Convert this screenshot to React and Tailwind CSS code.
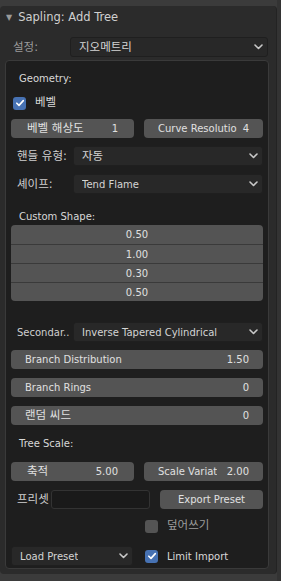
import React from 'react';

const font = { fontFamily: '"DejaVu Sans", "Noto Sans CJK KR", sans-serif' };

// Korean glyphs render smaller than the reference at 10px, bump them a little
const K = ({ children }) => <span className="text-[11.5px] leading-none">{children}</span>;

const Chevron = () => (
	<svg width="9" height="6" viewBox="0 0 9 6" className="shrink-0">
		<path d="M1 1 L4.5 4.5 L8 1" fill="none" stroke="#c8c8c8" strokeWidth="1.6" strokeLinecap="round" strokeLinejoin="round" />
	</svg>
);

const Dropdown = ({ value, className = '' }) => (
	<div className={`h-[20px] flex items-center justify-between pl-[8px] pr-[4px] rounded-[3px] bg-[#282828] border border-[#1f1f1f] text-[#d4d4d4] ${className}`}>
		<span className="truncate">{value}</span>
		<Chevron />
	</div>
);

const NumField = ({ label, value, className = '' }) => (
	<div className={`h-[19px] flex items-center justify-between px-[14px] rounded-[4px] bg-[#545454] text-[#e0e0e0] ${className}`}>
		<span className="truncate">{label}</span>
		<span>{value}</span>
	</div>
);

const Check = ({ on }) => (
	<div className={`w-[13px] h-[13px] rounded-[3px] flex items-center justify-center shrink-0 ${on ? 'bg-[#4772b3]' : 'bg-[#545454]'}`}>
		{on && (
			<svg width="10" height="10" viewBox="0 0 10 10">
				<path d="M1.8 5.2 L4 7.4 L8.3 2.6" fill="none" stroke="#ffffff" strokeWidth="1.6" strokeLinecap="round" strokeLinejoin="round" />
			</svg>
		)}
	</div>
);

const Row = ({ label, children }) => (
	<div className="flex items-center h-[20px]">
		<span className="w-[62px] pl-[6px] text-[#cfcfcf] shrink-0 whitespace-nowrap">{label}</span>
		<div className="flex-1">{children}</div>
	</div>
);

export default function App() {
	return (
		<div style={font} className="w-[281px] h-[581px] bg-[#3b3b3b] overflow-hidden flex text-[10px]">
			<div className="w-[277px] mt-[6px] h-[568px] bg-[#2b2b2b] rounded-[4px] border-r border-[#232323] flex flex-col">
				<div className="h-[24px] flex items-center pl-[6px] gap-[6px] text-[#d0d0d0] text-[11.5px]">
					<span className="text-[8px] text-[#9a9a9a]">▼</span>
					<span>Sapling: Add Tree</span>
				</div>
				<div className="flex items-center h-[20px] mt-[7px] pr-[8px]">
					<span className="w-[70px] pl-[13px] text-[#9c9c9c]"><K>설정:</K></span>
					<Dropdown value={<K>지오메트리</K>} className="flex-1" />
				</div>
				<div className="mt-[3px] ml-[5px] w-[264px] h-[509px] bg-[#1e1e1e] border border-[#3a3a3a] rounded-[4px] flex flex-col pl-[5px] pr-[5px] text-[#d8d8d8]">
					<div className="h-[24px] flex items-end pl-[8px] mt-[1px]">Geometry:</div>
					<div className="flex items-center gap-[9px] h-[20px] mt-[7px] pl-[2px]">
						<Check on />
						<K>베벨</K>
					</div>
					<div className="flex gap-[10px] mt-[6px]">
						<NumField label={<K>베벨 해상도</K>} value="1" className="flex-1 px-[16px]" />
						<NumField label="Curve Resolutio" value="4" className="flex-1 px-[14px]" />
					</div>
					<div className="flex flex-col gap-[8px] mt-[8px]">
						<Row label={<K>핸들 유형:</K>}><Dropdown value={<K>자동</K>} /></Row>
						<Row label={<K>셰이프:</K>}><Dropdown value="Tend Flame" /></Row>
					</div>
					<div className="h-[20px] flex items-end pl-[8px] mt-[10px]">Custom Shape:</div>
					<div className="mt-[1px] rounded-[4px] overflow-hidden bg-[#545454] flex flex-col text-[#e0e0e0]">
						{['0.50', '1.00', '0.30', '0.50'].map((v, i) => (
							<div key={i} className={`h-[19px] flex items-center justify-center ${i > 0 ? 'border-t border-[#3a3a3a]' : ''}`}>{v}</div>
						))}
					</div>
					<div className="mt-[21px]">
						<Row label="Secondar..">
							<Dropdown value="Inverse Tapered Cylindrical" />
						</Row>
					</div>
					<div className="flex flex-col gap-[9px] mt-[8px]">
						<NumField label="Branch Distribution" value="1.50" />
						<NumField label="Branch Rings" value="0" />
						<NumField label={<K>랜덤 씨드</K>} value="0" />
					</div>
					<div className="h-[20px] flex items-end pl-[8px] mt-[6px]">Tree Scale:</div>
					<div className="flex gap-[10px] mt-[11px]">
						<NumField label={<K>축적</K>} value="5.00" className="flex-1 px-[16px]" />
						<NumField label="Scale Variat" value="2.00" className="flex-1 px-[14px]" />
					</div>
					<div className="flex items-center h-[20px] mt-[8px]">
						<span className="w-[40px] pl-[6px] text-[#cfcfcf]"><K>프리셋</K></span>
						<div className="w-[99px] h-[19px] bg-[#1a1a1a] border border-[#333333] rounded-[3px]" />
						<div className="flex-1 ml-[10px] h-[19px] rounded-[4px] bg-[#545454] flex items-center justify-center text-[#e0e0e0]">Export Preset</div>
					</div>
					<div className="flex items-center gap-[9px] h-[20px] mt-[7px] pl-[134px] text-[#9c9c9c]">
						<Check />
						<K>덮어쓰기</K>
					</div>
					<div className="flex items-center h-[20px] mt-[10px]">
						<Dropdown value="Load Preset" className="w-[122px]" />
						<div className="flex items-center gap-[9px] ml-[12px]">
							<Check on />
							<span>Limit Import</span>
						</div>
					</div>
				</div>
			</div>
			<div className="flex-1 bg-[#333333]" />
		</div>
	);
}
